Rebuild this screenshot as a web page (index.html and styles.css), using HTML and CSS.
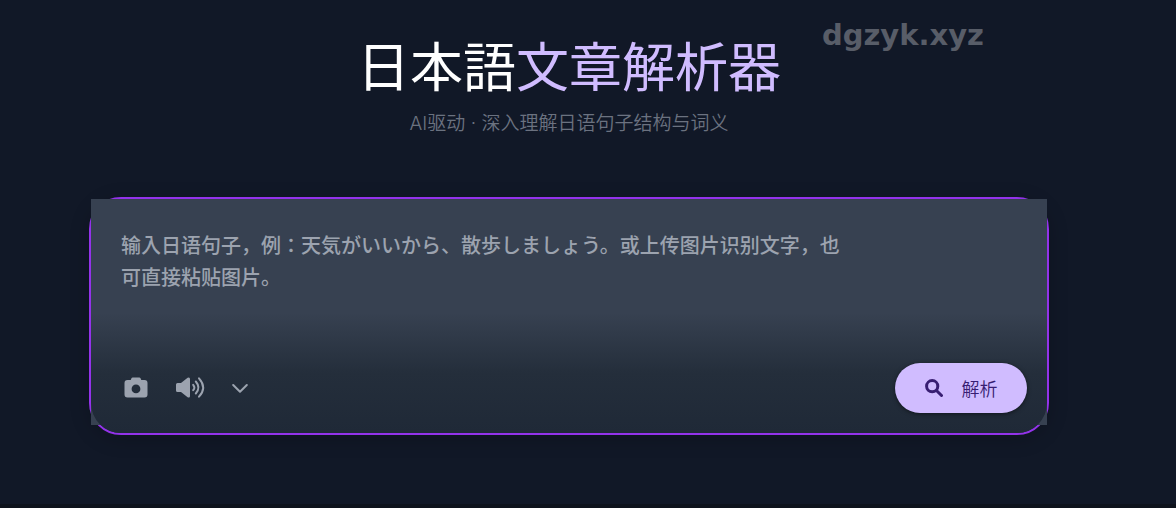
FILE: index.html
```
<!DOCTYPE html>
<html lang="zh-CN">
<head>
    <meta charset="UTF-8">
    <meta name="viewport" content="width=device-width, initial-scale=1.0">
    <title>日本語文章解析器</title>
    <link rel="stylesheet" href="styles.css">
</head>
<body>
    <div class="watermark">dgzyk.xyz</div>

    <main class="page">
        <header class="header">
            <h1 class="title" lang="ja">日本語<span class="title-accent">文章解析器</span></h1>
            <p class="subtitle">AI驱动 · 深入理解日语句子结构与词义</p>
        </header>

        <form class="editor">
            <textarea class="editor-input" lang="ja" aria-label="日语句子" placeholder="输入日语句子，例：天気がいいから、散歩しましょう。或上传图片识别文字，也可直接粘贴图片。"></textarea>

            <!-- 底部工具栏 -->
            <div class="toolbar">
                <div class="tools">
                    <button type="button" class="tool-btn" aria-label="上传图片">
                        <svg class="icon-camera" viewBox="0 0 24 22"><path fill-rule="evenodd" d="M8.6 .5h6.800q.7 0 1 .6L17.300 3H20.500Q23.500 3 23.500 6V17.500Q23.500 20.500 20.500 20.500H3.500Q.5 20.500 .5 17.500V6Q.5 3 3.500 3H6.700L7.600 1.100Q7.900 .5 8.600 .5ZM12 7.500A4.400 4.400 0 1 0 12 16.300A4.400 4.400 0 1 0 12 7.500Z"/></svg>
                    </button>
                    <button type="button" class="tool-btn" aria-label="朗读">
                        <svg class="icon-sound" viewBox="0 0 30 22">
                            <path d="M2.500 6H6L12.600 .8Q15 -.3 15 2V19Q15 21.300 12.600 20.200L6 15H2.500Q1 15 1 13.500V7.500Q1 6 2.500 6Z"/>
                            <g class="waves"><path d="M18.200 7.800Q20.500 10.500 18.200 13.200"/><path d="M20.800 4.500Q26 10.500 20.800 16.500"/><path d="M24 1.300Q32.300 10.500 24 19.700"/></g>
                        </svg>
                    </button>
                    <button type="button" class="tool-btn" aria-label="更多选项">
                        <svg class="icon-chevron" viewBox="0 0 16 10"><path d="M1.200 2L8 8.800L14.800 2"/></svg>
                    </button>
                </div>
                <button type="submit" class="analyze-btn">
                    <svg class="icon-search" viewBox="0 0 18 18"><circle cx="7.200" cy="7.200" r="5.600"/><path d="M11.500 11.500L16.500 16.500"/></svg>
                    <span>解析</span>
                </button>
            </div>
        </form>
    </main>
</body>
</html>
```
FILE: styles.css
```
* {
    box-sizing: border-box;
}

body {
    margin: 0;
    min-height: 100vh;
    font-family: "Noto Sans", "Noto Sans CJK SC", sans-serif;
    background-color: #111827;
    color: #ffffff;
    border-bottom: 4px solid #0e131c;
}

.page {
    padding: 28px 54px 68px 16px;
}

/* 标题 */
.header {
    text-align: center;
    margin-bottom: 59px;
}
.title {
    margin: 0;
    font-family: "Noto Sans CJK JP", sans-serif;
    font-size: 53px;
    font-weight: 400;
    line-height: 72px;
}
.title-accent {
    color: #d0bcff;
}
.subtitle {
    margin: 9px 0 0;
    font-family: Inter, "Noto Sans CJK SC", sans-serif;
    font-size: 19px;
    font-weight: 350;
    line-height: 29px;
    color: #6b7280;
}

/* 水印 */
.watermark {
    position: absolute;
    top: 17px;
    right: 192px;
    font-family: "DejaVu Sans", sans-serif;
    font-size: 29px;
    font-weight: bold;
    line-height: 36px;
    color: #585d68;
}

/* 输入框 */
.editor {
    position: relative;
    max-width: 960px;
    height: 238px;
    margin: 0 auto;
    background-color: #1f2937;
    border: 2px solid #9333ea;
    border-radius: 32px;
    box-shadow: 0 4px 20px rgba(0, 0, 0, 0.2);
}
.editor-input {
    display: block;
    width: 100%;
    height: 226px;
    padding: 30px 192px 96px 30px;
    border: none;
    outline: none;
    resize: none;
    background-color: #374151;
    color: #ffffff;
    font-family: "Noto Sans CJK JP", "Noto Sans CJK SC", sans-serif;
    font-size: 20px;
    font-weight: 500;
    line-height: 32px;
}
.editor-input::placeholder {
    color: #9ca3af;
    opacity: 1;
}

/* 工具栏覆盖在输入框底部 */
.toolbar {
    position: absolute;
    left: 0;
    right: 0;
    bottom: 0;
    display: flex;
    align-items: flex-end;
    justify-content: space-between;
    height: 120px;
    padding: 20px;
    border-radius: 0 0 30px 30px;
    background: linear-gradient(to top, #1f2937, #242e3b 50%, rgba(55, 65, 81, 0));
}
.tools {
    display: flex;
    gap: 1px;
}
.tool-btn {
    display: flex;
    align-items: center;
    justify-content: center;
    height: 50px;
    padding: 0 13px;
    border: none;
    border-radius: 25px;
    background: none;
    color: #9ca3af;
    cursor: pointer;
}
.tool-btn svg {
    fill: currentColor;
}
.icon-camera {
    width: 24px;
    height: 22px;
}
.icon-sound {
    width: 30px;
    height: 22px;
    overflow: visible;
}
.waves,
.tool-btn .icon-chevron {
    fill: none;
    stroke: currentColor;
    stroke-width: 2;
    stroke-linecap: round;
    stroke-linejoin: round;
}
.icon-chevron {
    width: 16px;
    height: 10px;
}

/* 解析按钮 */
.analyze-btn {
    display: flex;
    align-items: center;
    justify-content: center;
    gap: 19px;
    width: 132px;
    height: 50px;
    padding: 0;
    border: none;
    border-radius: 25px;
    background-color: #d0bcff;
    color: #381e72;
    font-family: "Noto Sans CJK SC", sans-serif;
    font-size: 18px;
    font-weight: 350;
    line-height: 24px;
    box-shadow: 0 1px 4px rgba(0, 0, 0, 0.5);
    cursor: pointer;
}
.icon-search {
    width: 18px;
    height: 18px;
    fill: none;
    stroke: currentColor;
    stroke-width: 3;
    stroke-linecap: round;
}
```
